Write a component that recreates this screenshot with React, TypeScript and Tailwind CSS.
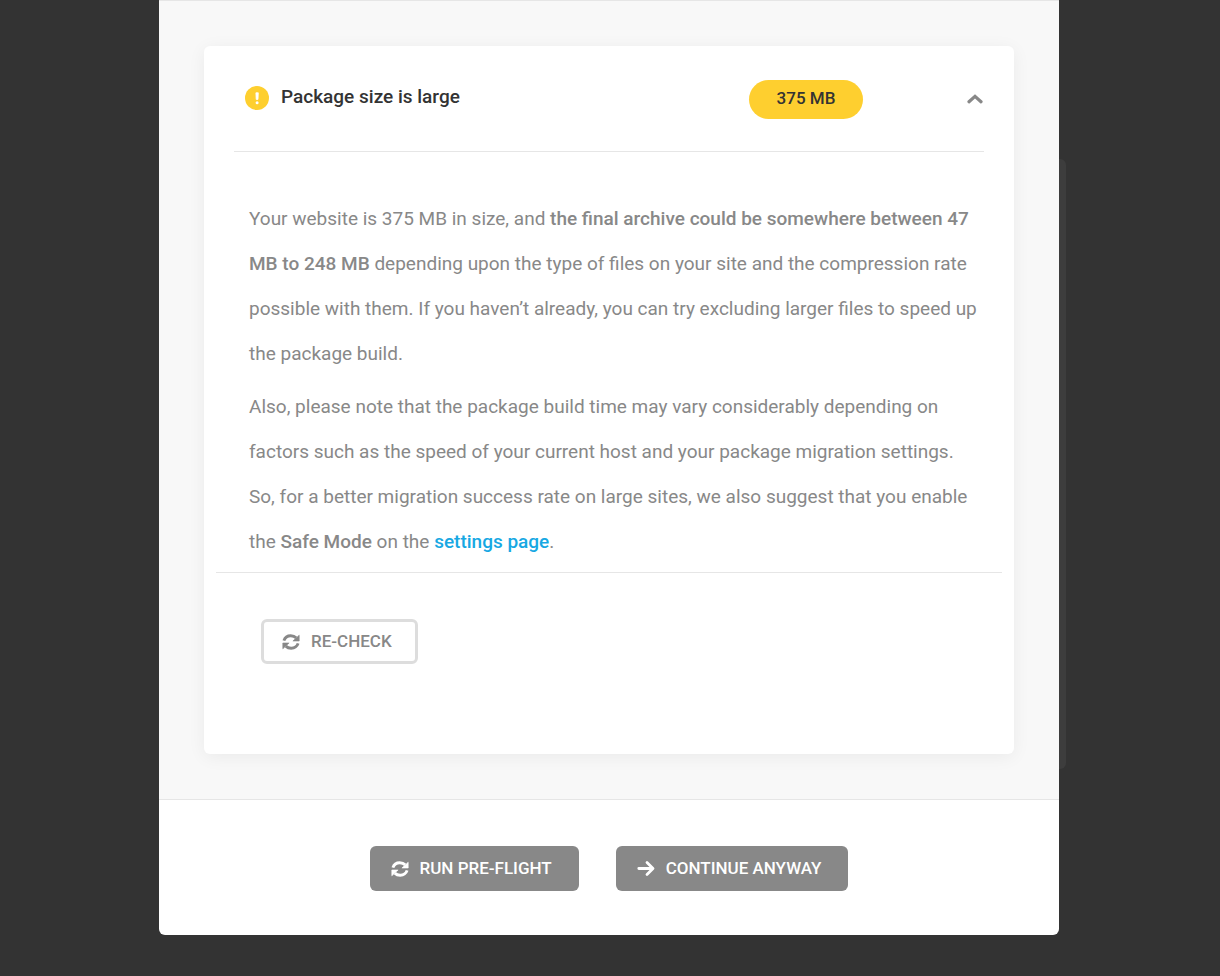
import { useState } from 'react';
import type { ReactNode } from 'react';

function RefreshIcon() {
  return (
    <svg viewBox="0 0 18 16" className="w-[18px] h-4" aria-hidden="true">
      <path d="M1.9 6.6C2.9 3.6 5.6 1.8 8.8 1.8C10.9 1.8 12.8 2.5 14.2 3.9M16.1 9.4C15.1 12.4 12.4 14.2 9.2 14.2C7.1 14.2 5.2 13.5 3.8 12.1" fill="none" stroke="currentColor" strokeWidth="2.9" strokeLinecap="butt" />
      <path d="M17.2 1.2V7H10.9zM.8 14.8V9H7.1z" fill="currentColor" stroke="currentColor" strokeWidth=".6" strokeLinejoin="round" />
    </svg>
  );
}

function ArrowIcon() {
  return (
    <svg viewBox="0 0 18 18" className="size-[18px]" fill="none" stroke="currentColor" strokeWidth="2.8" strokeLinecap="round" strokeLinejoin="round" aria-hidden="true">
      <path d="M1.8 8.5H15.5M10 2.5L16 8.5L10 14.5" />
    </svg>
  );
}

function ChevronIcon({ open }: { open: boolean }) {
  return (
    <svg viewBox="0 0 16 10" className={open ? 'w-4 h-2.5' : 'w-4 h-2.5 rotate-180'} fill="none" stroke="currentColor" strokeWidth="3.2" strokeLinecap="round" strokeLinejoin="miter" aria-hidden="true">
      <path d="M2 7.8L8 2.4L14 7.8" />
    </svg>
  );
}

function WarningIcon() {
  return (
    <svg viewBox="0 0 24 24" className="size-6 shrink-0" aria-hidden="true">
      <circle cx="12" cy="12" r="12" fill="#fecf2f" />
      <path d="M10.9 6.8h2.4l-.3 6.6h-1.8z" fill="#fff" stroke="#fff" strokeWidth=".8" strokeLinejoin="round" />
      <circle cx="12.1" cy="16.7" r="1.5" fill="#fff" />
    </svg>
  );
}

function FooterButton({ icon, children }: { icon: ReactNode; children: ReactNode }) {
  return (
    <button type="button" className="flex items-center gap-[11px] h-[45px] pl-[21px] pr-[27px] rounded-md bg-[#888] text-white text-[17px] font-medium whitespace-nowrap">
      {icon}
      {children}
    </button>
  );
}

export default function App() {
  const [open, setOpen] = useState(true);

  return (
    <div className="relative isolate min-h-screen bg-[#333] pr-0.5 pb-10 font-[Roboto,sans-serif] text-[#888]">
      {/* Dimmed page panel behind the dialog */}
      <div className="absolute -z-10 top-[159px] left-1/2 h-[610px] w-[456px] rounded-md bg-[#3d3d3d]" />

      <div role="dialog" aria-label="Pre-flight check" className="mx-auto w-full max-w-[900px] rounded-b-md bg-white overflow-hidden">
        <div className="border-y border-[#e6e6e6] bg-[#f8f8f8] p-[45px]">
          <section className="rounded-md bg-white shadow-[0_3px_18px_rgba(0,0,0,0.06)]">
            <div className="mx-[30px] flex items-center h-[106px] border-b border-[#e6e6e6] text-[#333]">
              <div className="flex flex-1 items-center gap-3 pl-[11px] pb-0.5">
                <WarningIcon />
                <h3 className="text-[19px] font-medium">Package size is large</h3>
              </div>
              <span className="flex items-center justify-center mt-px w-[114px] h-[39px] rounded-full bg-[#fecf2f] text-[17px] font-medium">375 MB</span>
              <button
                type="button"
                aria-label="Toggle details"
                aria-expanded={open}
                onClick={() => setOpen(!open)}
                className="flex justify-end w-[121px] pr-px text-[#888]"
              >
                <ChevronIcon open={open} />
              </button>
            </div>

            {open && (
              <>
                <div className="pl-[45px] pr-8 pt-11 pb-2 text-[19px] leading-[45px]">
                  <p className="mb-2">
                    Your website is 375 MB in size, and <b className="font-medium">the final archive could be somewhere between 47 MB to 248 MB</b> depending
                    upon the type of files on your site and the compression rate possible with them. If you haven’t already, you can try
                    excluding larger files to speed up the package build.
                  </p>
                  <p>
                    Also, please note that the package build time may vary considerably depending on factors such as the speed of your
                    current host and your package migration settings. So, for a better migration success rate on large sites, we also
                    suggest that you enable the <b className="font-medium">Safe Mode</b> on the <a href="#settings" className="font-medium text-[#17a8e3]">settings page</a>.
                  </p>
                </div>
                <div className="mx-3 border-t border-[#e6e6e6] px-[45px] pt-[46px] pb-[90px]">
                  <button type="button" className="flex items-center gap-[11px] h-[45px] pl-[18px] pr-[23px] rounded-md border-3 border-[#ddd] text-[17px] font-medium">
                    <RefreshIcon />
                    RE-CHECK
                  </button>
                </div>
              </>
            )}
          </section>
        </div>

        <div className="flex flex-wrap justify-center gap-[37px] pt-[46px] pb-11">
          <FooterButton icon={<RefreshIcon />}>RUN PRE-FLIGHT</FooterButton>
          <FooterButton icon={<ArrowIcon />}>CONTINUE ANYWAY</FooterButton>
        </div>
      </div>
    </div>
  );
}
